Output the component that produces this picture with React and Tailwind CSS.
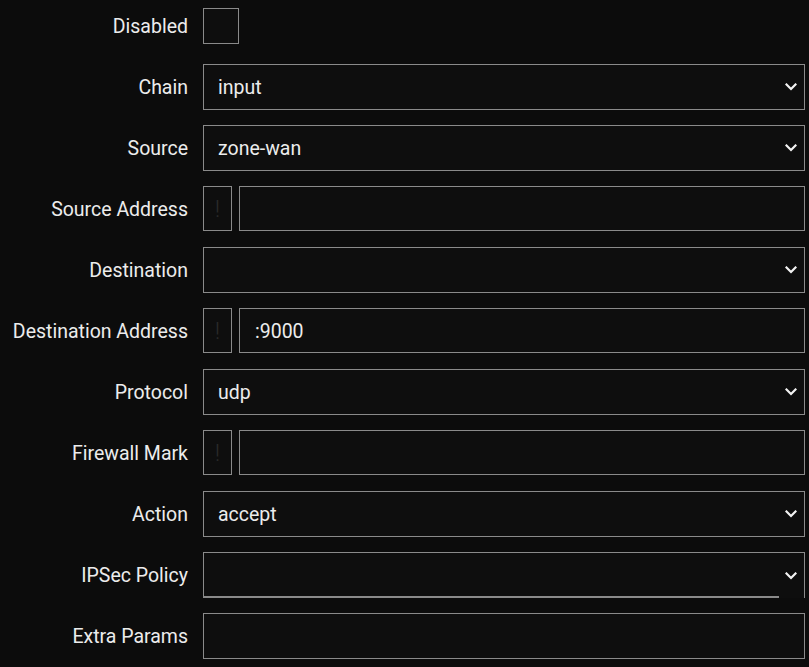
import React from "react";

const Chevron = () => (
  <svg width="12" height="8" viewBox="0 0 12 8" className="absolute right-[7px] top-1/2 -translate-y-1/2">
    <path d="M1.5 1.5 L6 6 L10.5 1.5" fill="none" stroke="#f2f2f2" strokeWidth="2.2" strokeLinecap="square" />
  </svg>
);

const Label = ({ children }) => (
  <div className="w-[188px] shrink-0 text-right text-[19.5px] text-[#ececec] leading-none whitespace-nowrap pt-[2px]">{children}</div>
);

const Select = ({ value }) => (
  <div className="relative flex-1 h-[46px] border border-[#8a8a8a] bg-[#0e0e0e] flex items-center pl-[14px] pt-[2px] text-[19.5px] text-[#ececec]">
    {value}
    <Chevron />
  </div>
);

const Input = ({ value }) => (
  <div className="flex-1 h-[46px] border border-[#8a8a8a] bg-[#0e0e0e] flex items-center pl-[15px] pt-[2px] text-[19.5px] text-[#ececec]">
    {value}
  </div>
);

const PrefixInput = ({ value }) => (
  <div className="flex-1 flex gap-[7px] h-[46px]">
    <div className="w-[29px] h-[45px] border border-[#8a8a8a] bg-[#0e0e0e] flex items-center justify-center text-[24px] text-[#2a2a2a] font-light">!</div>
    <div className="flex-1 h-[45px] border border-[#8a8a8a] bg-[#0e0e0e] flex items-center pl-[15px] pt-[2px] text-[19.5px] text-[#ececec]">{value}</div>
  </div>
);

const Row = ({ label, children }) => (
  <div className="flex items-center gap-[15px] h-[46px]">
    <Label>{label}</Label>
    {children}
  </div>
);

export default function App() {
  return (
    <div className="w-[809px] h-[667px] bg-[#0c0c0c] pr-[4px] pt-[8px]" style={{ fontFamily: "Roboto, 'Liberation Sans', sans-serif" }}>
      <div className="flex items-center gap-[15px] h-[36px] mb-[20px]">
        <Label>Disabled</Label>
        <div className="w-[36px] h-[36px] border border-[#8a8a8a] bg-[#0e0e0e]" />
      </div>
      <div className="flex flex-col gap-[15px]">
        <Row label="Chain"><Select value="input" /></Row>
        <Row label="Source"><Select value="zone-wan" /></Row>
        <Row label="Source Address"><PrefixInput value="" /></Row>
        <Row label="Destination"><Select value="" /></Row>
        <Row label="Destination Address"><PrefixInput value=":9000" /></Row>
        <Row label="Protocol"><Select value="udp" /></Row>
        <Row label="Firewall Mark"><PrefixInput value="" /></Row>
        <Row label="Action"><Select value="accept" /></Row>
        <Row label="IPSec Policy">
          <div className="relative flex-1 h-[46px] border border-b-0 border-[#8a8a8a] bg-[#0e0e0e]">
            <div className="absolute left-[-1px] bottom-0 right-[25px] h-[2px] bg-[#8a8a8a]" />
            <Chevron />
          </div>
        </Row>
        <Row label="Extra Params"><Input value="" /></Row>
      </div>
    </div>
  );
}
